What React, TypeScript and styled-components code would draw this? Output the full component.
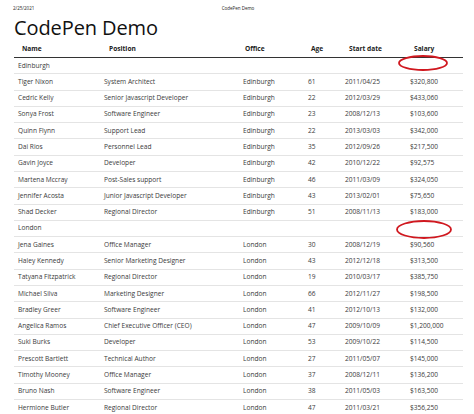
import React from "react";
import styled, { createGlobalStyle } from "styled-components";

const Global = createGlobalStyle`
  html, body { margin: 0; padding: 0; background: #fff; }
  body { font-family: "Open Sans", "Noto Sans", sans-serif; color: #333; }
`;

const Page = styled.div`
  position: relative;
  width: 474px;
  height: 414px;
  overflow: hidden;
  padding: 0 11px 0 14px;
  box-sizing: border-box;
`;

const PrintHeader = styled.div`
  display: grid;
  grid-template-columns: 1fr auto 1fr;
  align-items: center;
  height: 16px;
  margin-left: -1px;
  font-size: 4.5px;
  color: #222;
`;

const Centered = styled.span`
  text-align: center;
`;

const Title = styled.h1`
  margin: 0;
  font-size: 20px;
  font-weight: 400;
  line-height: 24px;
  color: #111;
  letter-spacing: -0.1px;
`;

const Table = styled.table`
  width: 449px;
  border-collapse: collapse;
  table-layout: fixed;
  margin-top: 0;
  font-size: 6.6px;
`;

const Th = styled.th<{ $pad?: number }>`
  text-align: left;
  font-weight: 700;
  color: #222;
  padding: 4.5px 0 4.5px ${(p) => p.$pad ?? 8}px;
  line-height: 8px;
  border-bottom: 1px solid #333;
`;

const Td = styled.td`
  padding: 3.65px 4px;
  line-height: 8px;
  border-top: 1px solid #e4e4e4;
  white-space: nowrap;
  color: #3a3a3a;
`;

const GroupTd = styled(Td)`
  color: #3a3a3a;
`;

const FirstRow = styled.tr`
  & > td { border-top: none; }
`;

const Mark = styled.svg`
  position: absolute;
  overflow: visible;
`;

type Row = [string, string, string, number, string, string];

const edinburgh: Row[] = [
  ["Tiger Nixon", "System Architect", "Edinburgh", 61, "2011/04/25", "$320,800"],
  ["Cedric Kelly", "Senior Javascript Developer", "Edinburgh", 22, "2012/03/29", "$433,060"],
  ["Sonya Frost", "Software Engineer", "Edinburgh", 23, "2008/12/13", "$103,600"],
  ["Quinn Flynn", "Support Lead", "Edinburgh", 22, "2013/03/03", "$342,000"],
  ["Dai Rios", "Personnel Lead", "Edinburgh", 35, "2012/09/26", "$217,500"],
  ["Gavin Joyce", "Developer", "Edinburgh", 42, "2010/12/22", "$92,575"],
  ["Martena Mccray", "Post-Sales support", "Edinburgh", 46, "2011/03/09", "$324,050"],
  ["Jennifer Acosta", "Junior Javascript Developer", "Edinburgh", 43, "2013/02/01", "$75,650"],
  ["Shad Decker", "Regional Director", "Edinburgh", 51, "2008/11/13", "$183,000"],
];

const london: Row[] = [
  ["Jena Gaines", "Office Manager", "London", 30, "2008/12/19", "$90,560"],
  ["Haley Kennedy", "Senior Marketing Designer", "London", 43, "2012/12/18", "$313,500"],
  ["Tatyana Fitzpatrick", "Regional Director", "London", 19, "2010/03/17", "$385,750"],
  ["Michael Silva", "Marketing Designer", "London", 66, "2012/11/27", "$198,500"],
  ["Bradley Greer", "Software Engineer", "London", 41, "2012/10/13", "$132,000"],
  ["Angelica Ramos", "Chief Executive Officer (CEO)", "London", 47, "2009/10/09", "$1,200,000"],
  ["Suki Burks", "Developer", "London", 53, "2009/10/22", "$114,500"],
  ["Prescott Bartlett", "Technical Author", "London", 27, "2011/05/07", "$145,000"],
  ["Timothy Mooney", "Office Manager", "London", 37, "2008/12/11", "$136,200"],
  ["Bruno Nash", "Software Engineer", "London", 38, "2011/05/03", "$163,500"],
  ["Hermione Butler", "Regional Director", "London", 47, "2011/03/21", "$356,250"],
];

const widths = [86, 139, 65, 37, 65, 57];

const DataRow = ({ r }: { r: Row }) => (
  <tr>
    {r.map((c, i) => (
      <Td key={i}>{c}</Td>
    ))}
  </tr>
);

export default function App() {
  return (
    <>
      <Global />
      <Page>
        <PrintHeader>
          <span>2/25/2021</span>
          <Centered>CodePen Demo</Centered>
          <span />
        </PrintHeader>
        <Title>CodePen Demo</Title>
        <Table>
          <colgroup>
            {widths.map((w, i) => (
              <col key={i} style={{ width: w }} />
            ))}
          </colgroup>
          <thead>
            <tr>
              <Th>Name</Th>
              <Th $pad={9}>Position</Th>
              <Th $pad={6}>Office</Th>
              <Th $pad={7}>Age</Th>
              <Th $pad={8}>Start date</Th>
              <Th $pad={8}>Salary</Th>
            </tr>
          </thead>
          <tbody>
            <FirstRow>
              <GroupTd colSpan={6}>Edinburgh</GroupTd>
            </FirstRow>
            {edinburgh.map((r) => (
              <DataRow key={r[0]} r={r} />
            ))}
            <tr>
              <GroupTd colSpan={6}>London</GroupTd>
            </tr>
            {london.map((r) => (
              <DataRow key={r[0]} r={r} />
            ))}
          </tbody>
        </Table>
        <Mark style={{ left: 398, top: 55 }} width="50" height="16" viewBox="0 0 50 16">
          <ellipse cx="25" cy="8" rx="24" ry="7" fill="none" stroke="#d0181f" strokeWidth="1.8" />
        </Mark>
        <Mark style={{ left: 396, top: 220 }} width="56" height="19" viewBox="0 0 56 19">
          <ellipse cx="28" cy="9.5" rx="27" ry="8.5" fill="none" stroke="#d0181f" strokeWidth="1.8" />
        </Mark>
      </Page>
    </>
  );
}
